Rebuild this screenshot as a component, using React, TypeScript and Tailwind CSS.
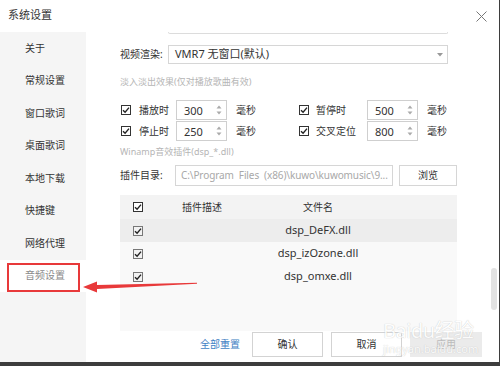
import React from 'react'

const font = { fontFamily: '"Noto Sans", "Noto Sans CJK SC", sans-serif' }

const menu = ['关于', '常规设置', '窗口歌词', '桌面歌词', '本地下载', '快捷键', '网络代理', '音频设置']

const plugins = ['dsp_DeFX.dll', 'dsp_izOzone.dll', 'dsp_omxe.dll']

function Check({ gray = false }: { gray?: boolean }) {
  return (
    <svg width="10" height="10" viewBox="0 0 10 10" className="shrink-0">
      <rect x="0.5" y="0.5" width="9" height="9" fill={gray ? '#f2f2f2' : '#fff'} stroke={gray ? '#777' : '#333'} />
      <path d="M2 5.2 L4.1 7.2 L8 2.6" fill="none" stroke="#222" strokeWidth="1.4" />
    </svg>
  )
}

function Spin({ value }: { value: string }) {
  return (
    <div className="w-[51px] h-[20px] border border-[#cfcfcf] bg-white flex items-center justify-between pl-[7px] pr-[4px]">
      <span className="text-[11px] text-[#333] leading-none">{value}</span>
      <svg width="6" height="12" viewBox="0 0 6 12">
        <path d="M0.5 4.5 L3 1.5 L5.5 4.5 Z" fill="#aaa" />
        <path d="M0.5 7.5 L3 10.5 L5.5 7.5 Z" fill="#aaa" />
      </svg>
    </div>
  )
}

function TimeRow({ a, av, b, bv }: { a: string; av: string; b: string; bv: string }) {
  return (
    <div className="flex items-center h-[20px] text-[10px] text-[#333] whitespace-nowrap">
      <div className="w-[56px] flex items-center gap-[8px] pl-[1px]">
        <Check />
        <span>{a}</span>
      </div>
      <Spin value={av} />
      <span className="w-[72px] pl-[9px]">毫秒</span>
      <div className="w-[68px] flex items-center gap-[7px]">
        <Check />
        <span>{b}</span>
      </div>
      <Spin value={bv} />
      <span className="pl-[9px]">毫秒</span>
    </div>
  )
}

export default function App() {
  return (
    <div className="relative w-[500px] h-[366px] bg-[#3d3d3d] overflow-hidden" style={font}>
      <div className="w-[499px] h-[362px] bg-white flex flex-col">
        {/* title bar */}
        <div className="h-[32px] shrink-0 flex items-center justify-between pl-[8px] pr-[12px]">
          <span className="text-[11px] text-[#333] -mt-[2px]">系统设置</span>
          <svg width="11" height="11" viewBox="0 0 11 11">
            <path d="M0.5 0.5 L10.5 10.5 M10.5 0.5 L0.5 10.5" stroke="#777" strokeWidth="1" />
          </svg>
        </div>

        <div className="flex flex-1 min-h-0">
          {/* sidebar */}
          <div className="w-[86px] shrink-0 bg-[#f5f5f5] flex flex-col">
            {menu.map((m, i) => (
              <div
                key={m}
                className={
                  'h-[32.5px] shrink-0 flex items-center pl-[25px] text-[10px] ' +
                  (i === menu.length - 1 ? 'bg-white text-[#8a8a8a]' : 'text-[#333]')
                }
              >
                {m}
              </div>
            ))}
          </div>

          {/* main */}
          <div className="flex-1 flex flex-col pl-[34px]">
            <div className="h-[2px] shrink-0 ml-[48px] w-[280px] border-x border-b border-[#dcdcdc] rounded-b-[2px]" />

            <div className="mt-[11px] flex items-center text-[10px] text-[#333] whitespace-nowrap">
              <span className="w-[48px]">视频渲染:</span>
              <div className="w-[280px] h-[19px] border border-[#d6d6d6] flex items-center justify-between pl-[6px] pr-[4px] text-[11px]">
                <span>VMR7 无窗口(默认)</span>
                <svg width="6" height="4" viewBox="0 0 6 4">
                  <path d="M0 0 L6 0 L3 3.5 Z" fill="#999" />
                </svg>
              </div>
            </div>

            <div className="mt-[11px] text-[9px] leading-[14px] text-[#b5b5b5] whitespace-nowrap">淡入淡出效果(仅对播放歌曲有效)</div>

            <div className="mt-[11px] flex flex-col gap-[1px]">
              <TimeRow a="播放时" av="300" b="暂停时" bv="500" />
              <TimeRow a="停止时" av="250" b="交叉定位" bv="800" />
            </div>

            <div className="mt-[4px] text-[9px] leading-[14px] text-[#b5b5b5] whitespace-nowrap">Winamp音效插件(dsp_*.dll)</div>

            <div className="mt-[6px] flex items-center h-[21px] text-[10px] whitespace-nowrap">
              <span className="w-[55px] text-[#333]">插件目录:</span>
              <div className="w-[218px] h-[21px] border border-[#d6d6d6] flex items-center pl-[5px] text-[10px] tracking-[-0.1px] text-[#a8a8a8] overflow-hidden">
                C:\Program&nbsp; Files&nbsp; (x86)\kuwo\kuwomusic\9...
              </div>
              <div className="ml-[6px] w-[58px] h-[21px] border border-[#d6d6d6] flex items-center justify-center text-[#333]">
                浏览
              </div>
            </div>

            {/* plugin table */}
            <div className="mt-[9px] w-[337px] h-[136px] shrink-0 bg-[#f9f9f9] flex flex-col text-[11px] text-[#333]">
              <div className="h-[24px] shrink-0 bg-[#f3f3f3] flex items-center text-[10px]">
                <div className="w-[32px] pl-[13px] flex"><Check /></div>
                <div className="w-[100px] text-center">插件描述</div>
                <div className="w-[132px] text-center">文件名</div>
              </div>
              {plugins.map((p, i) => (
                <div key={p} className={'h-[23px] shrink-0 flex items-center ' + (i === 0 ? 'bg-[#ededed]' : '')}>
                  <div className="w-[32px] pl-[13px] flex"><Check gray /></div>
                  <div className="w-[100px]" />
                  <div className="w-[132px] text-center">{p}</div>
                </div>
              ))}
            </div>

            {/* buttons */}
            <div className="mt-[1px] flex items-center justify-end pr-[17px] gap-[8px] text-[10px] whitespace-nowrap">
              <span className="mr-[4px] text-[#3f7fc4]">全部重置</span>
              <div className="w-[71px] h-[25px] border border-[#d3d3d3] flex items-center justify-center text-[#333]">确认</div>
              <div className="w-[71px] h-[25px] border border-[#d3d3d3] flex items-center justify-center text-[#333]">取消</div>
              <div className="w-[72px] h-[25px] bg-[#ebebeb] flex items-center justify-center text-[#bbb]">应用</div>
            </div>
          </div>
        </div>
      </div>

      {/* scrollbar */}
      <div className="absolute left-[491px] top-[268px] w-[6px] h-[42px] rounded-full bg-[#e2e2e2]" />

      {/* annotation: red box and arrow */}
      <div className="absolute left-[7px] top-[263px] w-[73px] h-[29px] border-2 border-[#e8393a]" />
      <svg className="absolute left-[80px] top-[276px]" width="120" height="20" viewBox="0 0 120 20">
        <path d="M3 11 L17 5.5 L17 9 L117 6.8 L117 7.8 L17 13 L17 16.5 Z" fill="#e8393a" />
      </svg>

      {/* watermark */}
      <div className="absolute left-[383px] top-[321px] flex flex-col items-start leading-none text-white opacity-80" style={{ textShadow: '0 0 1px #b0b0b0' }}>
        <span className="text-[20px] tracking-[-0.5px]">Baidu经验</span>
        <span className="text-[11px] mt-[2px]">jingyan.baidu.com</span>
      </div>
    </div>
  )
}
